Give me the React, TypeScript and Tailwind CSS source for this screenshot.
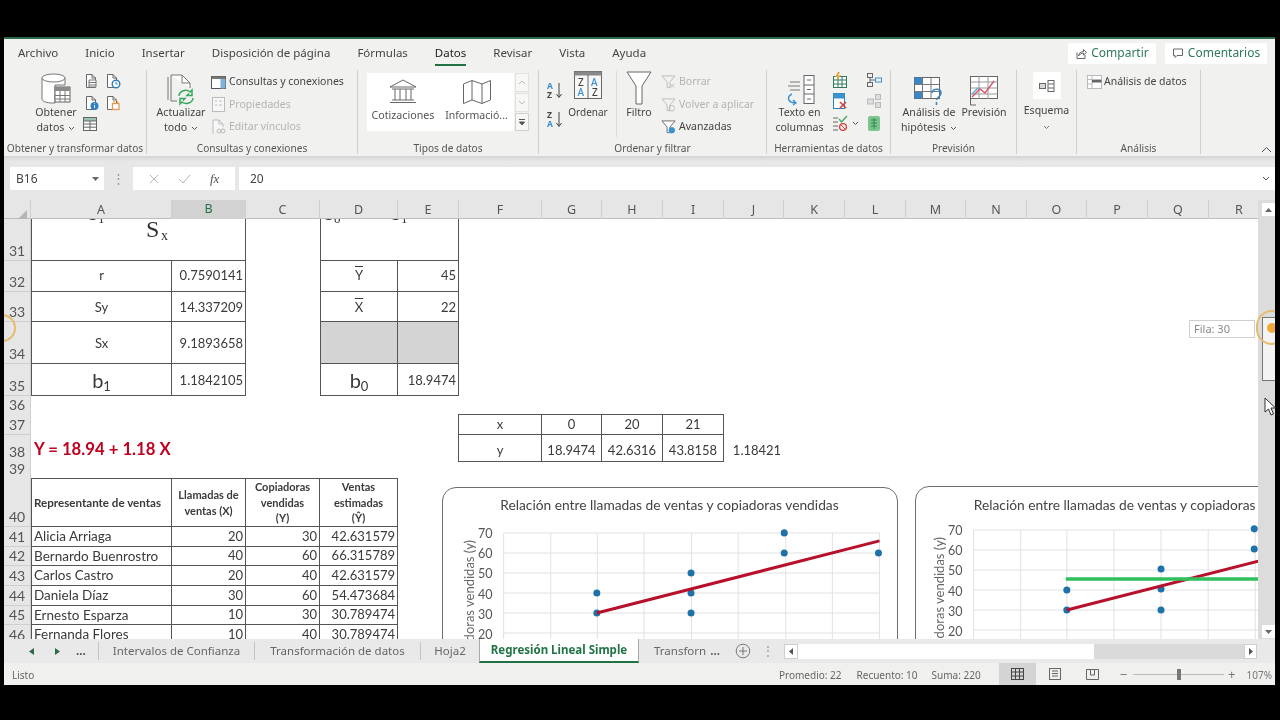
import React from "react";

const COLS = "grid grid-cols-[27px_141px_74px_74px_78px_61px_83px_60px_61px_61px_60px_61px_61px_60px_61px_60px_61px_61px_49px]";
const UI = "font-['Noto_Sans',sans-serif]";
const CELL = "font-['Lato',sans-serif]";
const LINE = "border-[#555]";

const Doc = ({ c = "#666", children }: { c?: string; children?: React.ReactNode }) => (
  <svg width="16" height="16" viewBox="0 0 16 16" fill="none">
    <path d="M2.5 14.5V1.5H8L11.5 5V14.5Z" fill="#fff" stroke={c} />
    <path d="M8 1.5V5H11.5" stroke={c} />
    {children}
  </svg>
);

const Chevron = () => (
  <svg width="7" height="5" viewBox="0 0 7 5" className="inline-block ml-1 align-middle" fill="none">
    <path d="M1 1L3.5 3.5L6 1" stroke="#555" />
  </svg>
);

const SmallRow = ({ icon, text, off, gap = "gap-[3px]" }: { icon: React.ReactNode; text: string; off?: boolean; gap?: string }) => (
  <div className={`flex items-center h-[22.5px] ${gap}`}>
    <span className="w-[15px] h-[16px] flex items-center justify-center">{icon}</span>
    <span className={`text-[10.5px] whitespace-nowrap ${off ? "text-[#b4b4b4]" : "text-[#444]"}`}>{text}</span>
  </div>
);

const Group = ({ w, label, children }: { w: string; label?: string; children: React.ReactNode }) => (
  <div className={`${w} shrink-0 h-[84px] flex flex-col border-r border-[#d0d0ce]`}>
    <div className="flex-1 flex min-h-0 pt-[1px]">{children}</div>
    {label ? <div className="h-[14px] leading-[16px] text-center text-[10.1px] text-[#555] whitespace-nowrap">{label}</div> : null}
  </div>
);

const Big = ({ w, icon, l1, l2, chev }: { w: string; icon: React.ReactNode; l1: string; l2?: string; chev?: boolean }) => (
  <div className={`${w} shrink-0 flex flex-col items-center`}>
    <div className="h-[35px] flex items-end justify-center">{icon}</div>
    <div className="text-[10.6px] leading-[15px] text-[#444] whitespace-nowrap mt-[-1px]">{l1}</div>
    {l2 || chev ? (
      <div className="text-[10.6px] leading-[15px] text-[#444] whitespace-nowrap">
        {l2}
        {chev ? <Chevron /> : null}
      </div>
    ) : null}
  </div>
);

const Cell = ({ cls = "", children }: { cls?: string; children?: React.ReactNode }) => (
  <div className={`border-r border-b ${LINE} flex items-center overflow-hidden whitespace-nowrap ${cls}`}>{children}</div>
);

const Num = ({ cls = "", v }: { cls?: string; v: string }) => (
  <Cell cls={`justify-end pr-[2px] text-[13px] ${cls}`}>{v}</Cell>
);

const Mid = ({ cls = "", children }: { cls?: string; children?: React.ReactNode }) => (
  <Cell cls={`justify-center text-[13px] ${cls}`}>{children}</Cell>
);

const Head = ({ children }: { children: React.ReactNode }) => (
  <Cell cls="border-t justify-center text-center text-[11px] font-bold leading-[15.5px]">
    <span>{children}</span>
  </Cell>
);

const Row = ({ n, h, children }: { n: number; h: string; children?: React.ReactNode }) => (
  <div className={`${COLS} ${h} text-[#3a3a3a] ${CELL}`}>
    <div className="bg-[#e6e6e6] border-r border-b border-[#cfcfcf] flex items-end justify-center pb-[1px] text-[14px] leading-[17px] text-[#555]">{n}</div>
    {children}
  </div>
);

const colNames = ["A", "B", "C", "D", "E", "F", "G", "H", "I", "J", "K", "L", "M", "N", "O", "P", "Q", "R"];

const reps: [number, string, string, string, string, string][] = [
  [41, "h-[20px]", "Alicia Arriaga", "20", "30", "42.631579"],
  [42, "h-[19px]", "Bernardo Buenrostro", "40", "60", "66.315789"],
  [43, "h-[20px]", "Carlos Castro", "20", "40", "42.631579"],
  [44, "h-[20px]", "Daniela Díaz", "30", "60", "54.473684"],
  [45, "h-[19px]", "Ernesto Esparza", "10", "30", "30.789474"],
  [46, "h-[20px]", "Fernanda Flores", "10", "40", "30.789474"],
];

const Chart = ({ box, vb, title, tx, ty, ticks, vlines, left, right, pts, red, green, axis }: {
  box: string; vb: string; title: string; tx: number; ty: number; ticks: [string, number][]; vlines: number[]; left: number; right: number;
  pts: [number, number][]; red: [number, number, number, number]; green?: [number, number, number, number]; axis: [number, number];
}) => (
  <div className={`absolute ${box} bg-white border-[1.5px] border-[#6d6d6d] rounded-[14px] overflow-hidden`}>
    <svg width="100%" height="100%" viewBox={vb} style={{ fontFamily: "Lato, sans-serif" }}>
      <text x={tx} y={ty} fontSize="13.75" fill="#444" textAnchor="middle">{title}</text>
      <text transform={`rotate(-90 ${axis[0]} ${axis[1]})`} x={axis[0]} y={axis[1]} fontSize="13" fill="#666" textAnchor="end">Copiadoras vendidas (y)</text>
      {ticks.map(([t, y]) => (
        <g key={t}>
          <line x1={left} x2={right} y1={y} y2={y} stroke="#e2e2e2" />
          <text x={left - 11} y={y + 5.5} fontSize="12.5" fill="#555" textAnchor="end">{t}</text>
        </g>
      ))}
      {vlines.map((x) => (
        <line key={x} x1={x} x2={x} y1={ticks[0][1]} y2="660" stroke="#e2e2e2" />
      ))}
      {pts.map(([x, y], i) => (
        <circle key={i} cx={x} cy={y} r="3.5" fill="#1f72a8" />
      ))}
      <line x1={red[0]} y1={red[1]} x2={red[2]} y2={red[3]} stroke="#b8102a" strokeWidth="3" />
      {green ? <line x1={green[0]} y1={green[1]} x2={green[2]} y2={green[3]} stroke="#2fbf5c" strokeWidth="3.5" /> : null}
    </svg>
  </div>
);

export default function App() {
  return (
    <div className={`relative w-[1280px] h-[720px] bg-black overflow-hidden pt-[37px] pb-[35px] pl-[4px] pr-[5px] ${UI}`}>
      <div className="h-full flex flex-col bg-[#f1f1ef] blur-[0.35px]">
        {/* tabs */}
        <div className="h-[29px] shrink-0 border-t-[2px] border-[#2d6a4a] flex items-center pl-[14px] pr-[8px] gap-[27px] text-[11.5px] text-[#444]">
          <span>Archivo</span>
          <span>Inicio</span>
          <span>Insertar</span>
          <span>Disposición de página</span>
          <span>Fórmulas</span>
          <span className="relative text-[#222]">
            Datos
            <span className="absolute left-0 right-0 bottom-[-5px] h-[2.5px] bg-[#217346]"></span>
          </span>
          <span>Revisar</span>
          <span>Vista</span>
          <span>Ayuda</span>
          <div className="ml-auto flex gap-[9px] text-[12px] text-[#2f7a57]">
            <div className="w-[88px] h-[21px] bg-white rounded-[2px] flex items-center justify-center gap-[3px] mt-[1px]">
              <svg width="13" height="13" viewBox="0 0 13 13" fill="none" stroke="#666">
                <path d="M2 5.5V11.5H10V8" />
                <path d="M3.5 9C4 6 6 4.5 8.5 4.5V2.5L11.5 5.5L8.5 8V6C6.5 6 5 7 3.5 9Z" />
              </svg>
              Compartir
            </div>
            <div className="w-[102px] h-[21px] bg-white rounded-[2px] flex items-center justify-center gap-[4px] mt-[1px]">
              <svg width="12" height="12" viewBox="0 0 12 12" fill="none" stroke="#666">
                <path d="M1.5 2H10.5V8.5H5L3 10.5V8.5H1.5Z" />
              </svg>
              Comentarios
            </div>
          </div>
        </div>

        {/* ribbon */}
        <div className="h-[90px] shrink-0 flex items-start pt-[4px] relative">
          <Group w="w-[143px]" label="Obtener y transformar datos">
            <div className="flex pl-[26px]">
              <Big w="w-[52px]" l1="Obtener" l2="datos" chev icon={
                <svg width="30" height="33" viewBox="0 0 30 33" fill="none">
                  <path d="M1 5V26C1 28.5 6 30 11 30H14V12H24V5" fill="#fff" stroke="#777" />
                  <ellipse cx="12.5" cy="5" rx="11.5" ry="4" fill="#fff" stroke="#777" />
                  <rect x="14" y="14" width="15" height="15" fill="#fff" stroke="#666" />
                  <rect x="14" y="14" width="15" height="4" fill="#8a8a8a" />
                  <path d="M14 22.5H29M14 26H29M19 18V29M24 18V29" stroke="#777" />
                </svg>
              } />
              <div className="flex flex-col pt-[2px]">
                <div className="flex gap-[5px] pl-[2px]">
                  <Doc><path d="M5 7H12V14H5Z" fill="#fff" stroke="#777" /><path d="M5 9.5H12M5 12H12" stroke="#777" /></Doc>
                  <Doc><circle cx="11" cy="11" r="3.8" fill="#fff" stroke="#2f80b8" strokeWidth="1.4" /><path d="M11 9V11H12.5" stroke="#2f80b8" /></Doc>
                </div>
                <div className="flex gap-[5px] pl-[2px] mt-[6px]">
                  <Doc><circle cx="10.5" cy="11" r="4" fill="#2f80c4" /><path d="M10.5 10V13M10.5 8.5V9" stroke="#fff" /></Doc>
                  <Doc><rect x="7.5" y="8.5" width="6.5" height="6" fill="#fff" stroke="#e09a50" strokeWidth="1.3" /><path d="M9 8.5V6.5C9 5 12.5 5 12.5 6.5V8.5" stroke="#e09a50" /></Doc>
                </div>
                <div className="mt-[5px]">
                  <svg width="16" height="16" viewBox="0 0 16 16" fill="none">
                    <rect x="1.5" y="1.5" width="13" height="13" fill="#fff" stroke="#666" />
                    <rect x="1.5" y="1.5" width="13" height="3.5" fill="#9cc2b0" stroke="#666" />
                    <path d="M1.5 8H14.5M1.5 11.2H14.5M8 5V14.5" stroke="#666" />
                  </svg>
                </div>
              </div>
            </div>
          </Group>

          <Group w="w-[211px]" label="Consultas y conexiones">
            <div className="flex pl-[8px]">
              <Big w="w-[52px]" l1="Actualizar" l2="todo" chev icon={
                <svg width="30" height="32" viewBox="0 0 30 32" fill="none">
                  <path d="M2 3V26" stroke="#777" />
                  <path d="M5 1H16L24 9V14" fill="#fff" stroke="#777" />
                  <path d="M5 1V27H11" stroke="#777" />
                  <path d="M16 1V9H24" stroke="#777" />
                  <path d="M13 22C13.5 17 20 14.5 24 18L26 16V21.5H21L23 19.5" stroke="#3aa75e" strokeWidth="1.5" />
                  <path d="M27 24C26.5 29 20 31 16 28L14 30V24.5H19L17 26.5" stroke="#3aa75e" strokeWidth="1.5" />
                </svg>
              } />
              <div className="flex flex-col pl-[4px]">
                <SmallRow text="Consultas y conexiones" icon={
                  <svg width="15" height="13" viewBox="0 0 15 13" fill="none">
                    <rect x=".5" y=".5" width="14" height="12" fill="#fff" stroke="#555" />
                    <rect x=".5" y=".5" width="14" height="2.5" fill="#777" />
                    <rect x="9.5" y="3" width="5" height="9.5" fill="#7fb4dc" />
                  </svg>
                } />
                <SmallRow off text="Propiedades" icon={
                  <svg width="13" height="15" viewBox="0 0 13 15" fill="none" stroke="#bbb">
                    <rect x=".5" y=".5" width="12" height="14" fill="#f7f7f7" />
                    <path d="M3 4H5M7 4H10M3 8H5M7 8H10" />
                  </svg>
                } />
                <SmallRow off text="Editar vínculos" icon={
                  <svg width="15" height="16" viewBox="0 0 15 16" fill="none" stroke="#bbb">
                    <path d="M2 15V1H8L12 5V8" fill="#f7f7f7" />
                    <path d="M8 1V5H12" />
                    <rect x="6" y="10" width="4" height="4" rx="2" />
                    <rect x="10" y="10" width="4" height="4" rx="2" />
                  </svg>
                } />
              </div>
            </div>
          </Group>

          <Group w="w-[181px]" label="Tipos de datos">
            <div className="flex pl-[9px] pt-[2px]">
              <div className="w-[147px] h-[58px] bg-white flex">
                <div className="w-[72px] flex flex-col items-center pt-[6px]">
                  <svg width="30" height="26" viewBox="0 0 30 26" fill="none" stroke="#666">
                    <path d="M15 1L28 8H2Z" />
                    <path d="M4 10H26M2 23.5H28M4 21H26M7 10V21M12 10V21M18 10V21M23 10V21" />
                  </svg>
                  <span className="text-[10.7px] leading-[14px] text-[#555] mt-[3px]">Cotizaciones</span>
                </div>
                <div className="w-[75px] flex flex-col items-center pt-[6px]">
                  <svg width="30" height="26" viewBox="0 0 30 26" fill="none" stroke="#666">
                    <path d="M1.5 5L10 1.5L20 5L28.5 1.5V21L20 24.5L10 21L1.5 24.5Z" />
                    <path d="M10 1.5V21M20 5V24.5" />
                  </svg>
                  <span className="text-[10.5px] leading-[14px] text-[#555] mt-[3px]">Informació...</span>
                </div>
              </div>
              <div className="flex flex-col w-[14px] ml-[1px] h-[58px] gap-[1px]">
                {["M2 6L5 3L8 6", "M2 3L5 6L8 3"].map((d) => (
                  <div key={d} className="h-[19px] bg-[#f7f7f6] border border-[#e2e2e0] flex items-center justify-center">
                    <svg width="10" height="9" viewBox="0 0 10 9" fill="none" stroke="#bbb"><path d={d} /></svg>
                  </div>
                ))}
                <div className="h-[18px] bg-[#f7f7f6] border border-[#d0d0d0] flex items-center justify-center">
                  <svg width="10" height="9" viewBox="0 0 10 9" fill="#555" stroke="#555"><path d="M2 1.5H8" /><path d="M2.5 4H7.5L5 7Z" /></svg>
                </div>
              </div>
            </div>
          </Group>

          <Group w="w-[228px]" label="Ordenar y filtrar">
            <div className="flex">
              <div className="flex flex-col pl-[8px] pt-[10px] w-[25px] gap-[11px] shrink-0">
                <svg width="17" height="18" viewBox="0 0 17 18" fontFamily="Noto Sans, sans-serif" fontSize="8.5" fontWeight="700">
                  <text x="0" y="8" fill="#3c8fcf">A</text>
                  <text x="0" y="16.5" fill="#444">Z</text>
                  <path d="M12 2V16M9.5 13L12 16.5L14.5 13" stroke="#444" fill="none" />
                </svg>
                <svg width="17" height="18" viewBox="0 0 17 18" fontFamily="Noto Sans, sans-serif" fontSize="8.5" fontWeight="700">
                  <text x="0" y="8" fill="#444">Z</text>
                  <text x="0" y="16.5" fill="#3c8fcf">A</text>
                  <path d="M12 2V16M9.5 13L12 16.5L14.5 13" stroke="#444" fill="none" />
                </svg>
              </div>
              <div className="w-[48px] flex flex-col items-center shrink-0">
                <svg width="28" height="29" viewBox="0 0 28 29" fontFamily="Noto Sans, sans-serif" fontSize="10" fontWeight="500">
                  <rect x=".5" y=".5" width="27" height="27" fill="#f7f7f6" stroke="#666" />
                  <rect x=".5" y=".5" width="27" height="4" fill="#888" />
                  <path d="M14 4V27.5" stroke="#666" />
                  <text x="4" y="14.5" fill="#444">Z</text>
                  <text x="3.5" y="25" fill="#3c8fcf">A</text>
                  <text x="17" y="14.5" fill="#3c8fcf">A</text>
                  <text x="18" y="25" fill="#444">Z</text>
                </svg>
                <span className="text-[10px] leading-[15px] text-[#444] mt-[5px]">Ordenar</span>
              </div>
              <div className="w-px h-[66px] bg-[#dcdcda] ml-[4px]"></div>
              <div className="w-[44px] flex flex-col items-center shrink-0">
                <svg width="26" height="34" viewBox="0 0 26 34" fill="none" stroke="#666">
                  <path d="M1 1H25L16 15V33H10V15Z" fill="#fff" />
                </svg>
                <span className="text-[10.6px] leading-[15px] text-[#444]">Filtro</span>
              </div>
              <div className="flex flex-col">
                <SmallRow off text="Borrar" icon={
                  <svg width="16" height="16" viewBox="0 0 16 16" fill="none" stroke="#bbb"><path d="M1 1.5H15L9.5 8V14H6.5V8Z" /><path d="M10 10L14 14M14 10L10 14" /></svg>
                } />
                <SmallRow off text="Volver a aplicar" icon={
                  <svg width="16" height="16" viewBox="0 0 16 16" fill="none" stroke="#bbb"><path d="M1 1.5H15L9.5 8V14H6.5V8Z" /><circle cx="11.5" cy="11.5" r="3" /></svg>
                } />
                <SmallRow text="Avanzadas" icon={
                  <svg width="16" height="16" viewBox="0 0 16 16" fill="none" stroke="#666"><path d="M1 1.5H15L9.5 8V14H6.5V8Z" fill="#fff" /><circle cx="11.5" cy="11.5" r="3" fill="#3a93cf" stroke="#3a93cf" /></svg>
                } />
              </div>
            </div>
          </Group>

          <Group w="w-[124px]" label="Herramientas de datos">
            <div className="flex">
              <Big w="w-[65px]" l1="Texto en" l2="columnas" icon={
                <svg width="30" height="32" viewBox="0 0 30 32" fill="none">
                  <path d="M5 8H15M3 12H15M5 16H15" stroke="#777" />
                  <rect x="19" y="1.5" width="10" height="28" fill="#fff" stroke="#666" />
                  <path d="M19 11H29M19 20H29M22 6H26M22 15.5H26M22 25H26" stroke="#666" />
                  <path d="M7 20C1 23 3 29 11 29M8 26L11 29L8 31" stroke="#3a93cf" strokeWidth="1.4" />
                </svg>
              } />
              <div className="flex flex-col pt-[1px] gap-[5px]">
                <svg width="16" height="16" viewBox="0 0 16 16" fill="none">
                  <rect x="1.5" y="4.5" width="13" height="11" fill="#fff" stroke="#2f7a57" />
                  <path d="M1.5 8H14.5M1.5 12H14.5M6 4.5V15.5M10 4.5V15.5" stroke="#2f7a57" />
                  <path d="M6 0L3 5H6L4 9L9 3.5H6L8 0Z" fill="#e5a133" />
                </svg>
                <svg width="16" height="17" viewBox="0 0 16 17" fill="none">
                  <rect x="1.5" y=".5" width="11" height="15" fill="#fff" stroke="#2f80b8" />
                  <rect x="1.5" y=".5" width="11" height="5" fill="#3a93cf" />
                  <path d="M8 9L14 15M14 9L8 15" stroke="#d8413a" strokeWidth="1.6" />
                </svg>
                <div className="flex items-center">
                  <svg width="16" height="16" viewBox="0 0 16 16" fill="none">
                    <path d="M1 3H6M1 7H6M1 11H6M1 15H6" stroke="#666" />
                    <path d="M7 4L9.5 7L15 1" stroke="#46a66a" strokeWidth="1.4" />
                    <circle cx="11" cy="12" r="3.4" stroke="#d8413a" strokeWidth="1.3" />
                    <path d="M8.7 9.7L13.3 14.3" stroke="#d8413a" />
                  </svg>
                  <Chevron />
                </div>
              </div>
              <div className="flex flex-col pl-[7px] pt-[2px] gap-[6px]">
                <svg width="16" height="15" viewBox="0 0 16 15" fill="none" stroke="#666">
                  <rect x="1.5" y=".5" width="5" height="4" /><rect x="1.5" y="9.5" width="5" height="4" /><rect x="9.5" y="5" width="6" height="4" stroke="#3a93cf" />
                  <path d="M4 4.5V9.5M4 7H9.5" />
                </svg>
                <svg width="16" height="15" viewBox="0 0 16 15" fill="#ddd" stroke="#bbb">
                  <rect x="9.5" y=".5" width="5" height="5" /><rect x="9.5" y="8.5" width="5" height="5" /><rect x="1.5" y="5" width="6" height="5" />
                </svg>
                <svg width="16" height="17" viewBox="0 0 16 17" fill="none">
                  <rect x="2" y="1" width="12" height="15" rx="2" fill="#7cc48d" />
                  <path d="M5 5H11M5 8H11M5 11H11M8 3V14" stroke="#2f8a52" />
                </svg>
              </div>
            </div>
          </Group>

          <Group w="w-[126px]" label="Previsión">
            <div className="flex pl-[9px]">
              <Big w="w-[58px]" l1="Análisis de" l2="hipótesis" chev icon={
                <svg width="30" height="29" viewBox="0 0 30 29" fill="none">
                  <rect x=".5" y=".5" width="25" height="21" fill="#fff" stroke="#666" />
                  <rect x=".5" y=".5" width="8" height="7" fill="#3a87c4" />
                  <rect x=".5" y="14.5" width="8" height="7" fill="#3a87c4" />
                  <path d="M8.5 1V21.5M17 1V21.5M1 7.5H25M1 14.5H25" stroke="#777" />
                  <path d="M18 16C19 11 27 11 27 16C27 20 22.5 20 22.5 23M22.5 25V28" stroke="#3a87c4" strokeWidth="1.6" />
                </svg>
              } />
              <div className="w-[1px]"></div>
              <Big w="w-[50px]" l1="Previsión" icon={
                <svg width="28" height="31" viewBox="0 0 28 31" fill="none">
                  <rect x=".5" y="1.5" width="27" height="22" fill="#fff" stroke="#666" />
                  <path d="M.5 7H27.5M.5 13H27.5M.5 19H27.5M9 1.5V24M18 1.5V24" stroke="#999" />
                  <path d="M2 22L10 14L15 18L24 6" stroke="#d8536a" strokeWidth="1.4" />
                  <path d="M2 19L8 13" stroke="#58a8d8" strokeWidth="1.4" />
                  <path d="M.5 24V30H6" stroke="#666" />
                </svg>
              } />
            </div>
          </Group>

          <Group w="w-[60px]">
            <div className="w-full flex flex-col items-center pt-[1px] h-full">
              <div className="w-[28px] h-[27px] bg-white flex items-center justify-center">
                <svg width="16" height="12" viewBox="0 0 16 12" fill="none" stroke="#666">
                  <rect x=".5" y="3.5" width="6" height="5" fill="#d8d8d8" />
                  <rect x="9" y=".5" width="6" height="11" />
                  <path d="M9 4H15M9 8H15" />
                </svg>
              </div>
              <span className="text-[10.5px] text-[#444] mt-[4px]">Esquema</span>
              <svg width="7" height="5" viewBox="0 0 7 5" fill="none" className="mt-[6px]"><path d="M1 1L3.5 3.5L6 1" stroke="#777" /></svg>
            </div>
          </Group>

          <Group w="w-[124px]" label="Análisis">
            <div className="pl-[10px]">
              <SmallRow gap="gap-[2px]" text="Análisis de datos" icon={
                <svg width="15" height="14" viewBox="0 0 15 14" fill="none">
                  <rect x=".5" y=".5" width="14" height="13" fill="#fff" stroke="#bbb" />
                  <path d="M5 .5V13.5M.5 4.5H14.5M.5 9H5" stroke="#bbb" />
                  <rect x="5" y="5" width="9.5" height="2.5" fill="#666" />
                </svg>
              } />
            </div>
          </Group>
          <svg width="11" height="7" viewBox="0 0 11 7" fill="none" stroke="#555" className="ml-auto mr-[3px] mt-[76px]">
            <path d="M1 6L5.5 1.5L10 6" />
          </svg>
        </div>

        {/* formula bar */}
        <div className="h-[44px] shrink-0 bg-[#e7e7e7] bg-gradient-to-b from-[#d4d4d4] to-[#e7e7e7] to-[12%] flex items-start pt-[11px] pl-[6px] text-[12px] text-[#444]">
          <div className="w-[94px] h-[23px] bg-white flex items-center pl-[6px] justify-between pr-[5px]">
            B16
            <svg width="7" height="4" viewBox="0 0 7 4" fill="#666"><path d="M0 0H7L3.5 4Z" /></svg>
          </div>
          <div className="w-[29px] h-[23px] flex items-center justify-center text-[#999] tracking-tighter text-[13px]">⋮</div>
          <div className="w-[102px] h-[23px] bg-white flex items-center justify-around px-[6px]">
            <svg width="10" height="10" viewBox="0 0 10 10" stroke="#b5b5b5" fill="none"><path d="M1 1L9 9M9 1L1 9" /></svg>
            <svg width="13" height="10" viewBox="0 0 13 10" stroke="#b5b5b5" fill="none"><path d="M1 5L5 9L12 1" /></svg>
            <span className="italic font-['Liberation_Serif',serif] text-[13px] text-[#555]">fx</span>
          </div>
          <div className="ml-[4px] flex-1 h-[23px] bg-white flex items-center pl-[11px] pr-[5px] justify-between">
            20
            <svg width="8" height="5" viewBox="0 0 8 5" fill="none" stroke="#555"><path d="M1 1L4 4L7 1" /></svg>
          </div>
        </div>

        {/* sheet + vertical scroll */}
        <div className="h-[439px] shrink-0 flex">
          <div className="w-[1254px] shrink-0 flex flex-col">
            <div className={`${COLS} h-[19px] shrink-0 bg-[#e6e6e6] border-b border-[#bdbdbd] text-[12.5px] text-[#555]`}>
              <div className="flex items-end justify-end pr-[3px] pb-[2px] border-r border-[#cfcfcf]">
                <svg width="9" height="9" viewBox="0 0 9 9" fill="#b5b5b5"><path d="M9 0V9H0Z" /></svg>
              </div>
              {colNames.map((c) => (
                <div key={c} className={`flex items-center border-r border-[#cfcfcf] ${c === "R" ? "justify-start pl-[26px] border-r-0" : "justify-center"} ${c === "B" ? "bg-[#d2d2d2] text-[#217346] border-b-[2px] border-b-[#217346]" : ""}`}>{c}</div>
              ))}
            </div>
            <div className="relative h-[420px] bg-white overflow-hidden">
              <Row n={31} h="h-[42px]">
                <div className={`col-span-2 relative border-l border-r border-b ${LINE} overflow-hidden font-['Liberation_Serif',serif] text-[#333]`}>
                  <span className="absolute left-[56px] top-[-21px] text-[20px]">b<sub className="text-[13px]">1</sub></span>
                  <span className="absolute left-[100px] top-[-17px] text-[14px]">r</span>
                  <span className="absolute left-[114px] top-[-8px] text-[24px]">S</span>
                  <span className="absolute left-[129px] top-[6px] text-[14px]">x</span>
                </div>
                <div></div>
                <div className={`col-span-2 relative border-l border-r border-b ${LINE} overflow-hidden font-['Liberation_Serif',serif] text-[#333]`}>
                  <span className="absolute left-[3px] top-[-21px] text-[20px]">b<sub className="text-[13px]">0</sub></span>
                  <span className="absolute left-[42px] top-[-19px] text-[14px]">+</span>
                  <span className="absolute left-[70px] top-[-21px] text-[20px]">b<sub className="text-[13px]">1</sub></span>
                  <span className="absolute left-[92px] top-[-17px] text-[14px]">X</span>
                </div>
              </Row>
              <Row n={32} h="h-[31px]">
                <Mid cls="border-l">r</Mid>
                <Num v="0.7590141" />
                <div></div>
                <Mid cls="border-l"><span className="overline">Y</span></Mid>
                <Num v="45" />
              </Row>
              <Row n={33} h="h-[30px]">
                <Mid cls="border-l pt-[2px]">Sy</Mid>
                <Num cls="pt-[2px]" v="14.337209" />
                <div></div>
                <Mid cls="border-l pt-[2px]"><span className="overline">X</span></Mid>
                <Num cls="pt-[2px]" v="22" />
              </Row>
              <Row n={34} h="h-[42px]">
                <Mid cls="border-l pt-[2px]">Sx</Mid>
                <Num cls="pt-[2px]" v="9.1893658" />
                <div></div>
                <Cell cls="border-l bg-[#d4d4d4]" />
                <Cell cls="bg-[#d4d4d4]" />
              </Row>
              <Row n={35} h="h-[32px]">
                <Mid cls="border-l !text-[20px]"><span>b<sub className="text-[13px]">1</sub></span></Mid>
                <Num cls="pt-[2px]" v="1.1842105" />
                <div></div>
                <Mid cls="border-l !text-[20px]"><span>b<sub className="text-[13px]">0</sub></span></Mid>
                <Num cls="pt-[2px]" v="18.9474" />
              </Row>
              <Row n={36} h="h-[18px]" />
              <Row n={37} h="h-[21px]">
                <div className={`col-start-6 border-r ${LINE}`}></div>
                <Mid cls="border-t">x</Mid>
                <Mid cls="border-t">0</Mid>
                <Mid cls="border-t">20</Mid>
                <Mid cls="border-t">21</Mid>
              </Row>
              <Row n={38} h="h-[25px]">
                <div className="col-span-2 flex items-center pl-[3px] pt-[2px] text-[16.7px] font-bold text-[#c00020] whitespace-nowrap">Y = 18.94 + 1.18 X</div>
                <div className={`col-start-6 border-r ${LINE}`}></div>
                <Mid cls="pt-[5px]">y</Mid>
                <Mid cls="pt-[5px]">18.9474</Mid>
                <Mid cls="pt-[5px]">42.6316</Mid>
                <Mid cls="pt-[5px]">43.8158</Mid>
                <div className="flex items-center justify-center pt-[5px] pl-[6px] text-[13px]">1.18421</div>
              </Row>
              <Row n={39} h="h-[18px]" />
              <Row n={40} h="h-[49px]">
                <Cell cls="border-l border-t pl-[2px] text-[11.6px] font-bold">Representante de ventas</Cell>
                <Head>Llamadas de<br />ventas (X)</Head>
                <Head>Copiadoras<br />vendidas<br />(Y)</Head>
                <Head>Ventas<br />estimadas<br />(Ŷ)</Head>
              </Row>
              {reps.map(([n, h, name, x, y, e]) => (
                <Row key={n} n={n} h={h}>
                  <Cell cls="border-l pl-[2px] text-[13.5px]">{name}</Cell>
                  <Num v={x} />
                  <Num v={y} />
                  <Num v={e} />
                </Row>
              ))}
              <Chart
                box="left-[438px] top-[268px] w-[456px] h-[200px]"
                vb="443.5 488.5 453 197"
                title="Relación entre llamadas de ventas y copiadoras vendidas"
                tx={669.5}
                ty={510}
                ticks={[["70", 533], ["60", 553], ["50", 573], ["40", 593], ["30", 613], ["20", 633]]}
                vlines={[504, 551, 597.5, 644, 691.5, 738, 785.5, 832, 879]}
                left={504}
                right={879}
                pts={[[597, 593], [597, 613], [691, 573], [691, 593], [691, 613], [784, 533], [784, 553], [878, 553]]}
                red={[597, 613, 879, 541]}
                axis={[474, 540]}
              />
              <Chart
                box="left-[911px] top-[267px] w-[456px] h-[200px]"
                vb="916.5 487.5 453 197"
                title="Relación entre llamadas de ventas y copiadoras vendidas"
                tx={1143}
                ty={510}
                ticks={[["70", 530], ["60", 550], ["50", 570], ["40", 590], ["30", 610], ["20", 630]]}
                vlines={[974, 1021, 1067, 1114, 1161, 1208, 1255, 1302, 1349]}
                left={974}
                right={1349}
                pts={[[1067, 590], [1067, 610], [1161, 569], [1161, 589], [1161, 610], [1254, 529], [1254, 549], [1348, 549]]}
                red={[1067, 610, 1349, 538]}
                green={[1066, 579, 1349, 579]}
                axis={[944, 537]}
              />
              {/* tooltip */}
              <div className="absolute left-[1185px] top-[101px] w-[66px] h-[18px] bg-white border border-[#cfcfcf] text-[11px] text-[#888] pl-[4px] leading-[16px]">Fila: 30</div>
            </div>
          </div>
          {/* vertical scrollbar */}
          <div className="flex-1 bg-[#dcdcdc] flex flex-col items-end pt-[3px] pb-[1px]">
            <div className="w-[13px] h-[13px] bg-white flex items-center justify-center">
              <svg width="7" height="4" viewBox="0 0 7 4" fill="#666"><path d="M3.5 0L7 4H0Z" /></svg>
            </div>
            <div className="w-[13px] h-[64px] mt-[101px] bg-[#f3f3f3] border border-[#777] border-r-0"></div>
            <div className="w-[13px] h-[13px] mt-auto bg-white flex items-center justify-center">
              <svg width="7" height="4" viewBox="0 0 7 4" fill="#666"><path d="M0 0H7L3.5 4Z" /></svg>
            </div>
          </div>
        </div>

        {/* sheet tabs */}
        <div className="h-[24px] shrink-0 bg-[#e9e9e9] flex items-center text-[11.5px] text-[#666]">
          <div className="w-[94px] flex items-center pl-[25px] h-full">
            <svg width="5" height="7" viewBox="0 0 5 7" fill="#2d6a4a"><path d="M5 0V7L0 3.5Z" /></svg>
            <svg width="5" height="7" viewBox="0 0 5 7" fill="#2d6a4a" className="ml-[21px]"><path d="M0 0V7L5 3.5Z" /></svg>
            <span className="ml-[16px] font-bold text-[#555]">...</span>
          </div>
          <div className="w-px h-[18px] bg-[#c4c4c4]"></div>
          <div className="w-[155px] text-center">Intervalos de Confianza</div>
          <div className="w-px h-[18px] bg-[#c4c4c4]"></div>
          <div className="w-[165px] text-center">Transformación de datos</div>
          <div className="w-px h-[18px] bg-[#c4c4c4]"></div>
          <div className="w-[58px] text-center">Hoja2</div>
          <div className="w-[160px] h-[25px] mt-[-1px] bg-white border-x border-[#aaa] border-b-[2px] border-b-[#217346] flex items-center justify-center font-bold text-[#217346]">Regresión Lineal Simple</div>
          <div className="w-[95px] pl-[15px] whitespace-nowrap">Transforn <b className="ml-[1px]">...</b></div>
          <svg width="16" height="16" viewBox="0 0 16 16" fill="none" stroke="#777" className="ml-[1px]">
            <circle cx="8" cy="8" r="6.8" />
            <path d="M8 4V12M4 8H12" />
          </svg>
          <span className="w-[33px] text-center text-[#999]">⋮</span>
          <div className="w-[473px] h-[15px] flex bg-[#dadada] shrink-0">
            <div className="w-[14px] bg-white border border-[#cfcfcf] flex items-center justify-center">
              <svg width="4" height="7" viewBox="0 0 4 7" fill="#555"><path d="M4 0V7L0 3.5Z" /></svg>
            </div>
            <div className="w-[296px] bg-white"></div>
            <div className="ml-auto w-[13px] bg-white border border-[#cfcfcf] flex items-center justify-center">
              <svg width="4" height="7" viewBox="0 0 4 7" fill="#555"><path d="M0 0V7L4 3.5Z" /></svg>
            </div>
          </div>
        </div>

        {/* status */}
        <div className="flex-1 flex items-center bg-[#f0f0ee] text-[10px] text-[#666] pl-[8px]">
          <span className="pt-[3px]">Listo</span>
          <div className="ml-auto flex items-center h-full">
            <span className="pt-[3px]">Promedio: 22</span>
            <span className="pt-[3px] ml-[15px]">Recuento: 10</span>
            <span className="pt-[3px] ml-[14px]">Suma: 220</span>
            <div className="ml-[18px] w-[37px] h-full bg-[#d4d4d4] flex items-center justify-center">
              <svg width="13" height="12" viewBox="0 0 13 12" fill="none" stroke="#444"><rect x=".5" y=".5" width="12" height="11" /><path d="M.5 4H12.5M.5 8H12.5M4.5 .5V11.5M8.5 .5V11.5" /></svg>
            </div>
            <div className="w-[38px] flex justify-center">
              <svg width="12" height="12" viewBox="0 0 12 12" fill="none" stroke="#666"><rect x=".5" y=".5" width="11" height="11" /><path d="M3 3H9M3 5.5H9M3 8H9" /></svg>
            </div>
            <div className="w-[37px] flex justify-center">
              <svg width="13" height="11" viewBox="0 0 13 11" fill="none" stroke="#666"><path d="M.5 .5H12.5V10.5H.5ZM4.5 .5V6M8.5 .5V6M4.5 6H8.5" /></svg>
            </div>
            <span className="ml-[9px] text-[#777] text-[13px] leading-none">−</span>
            <div className="relative w-[91px] h-px bg-[#bbb] ml-[6px]">
              <div className="absolute left-[44px] top-[-5px] w-[4px] h-[11px] bg-[#777]"></div>
            </div>
            <span className="ml-[4px] text-[#777] text-[13px] leading-none">+</span>
            <span className="pt-[3px] ml-[11px] mr-[3px] text-[#777]">107%</span>
          </div>
        </div>
      </div>

      {/* recording highlights */}
      <div className="absolute left-[-12px] top-[314px] w-[28px] h-[28px] rounded-full border-2 border-[#e6bb6c]"></div>
      <div className="absolute left-[1256px] top-[310px] w-[32px] h-[35px] rounded-full border-2 border-[#e6bb6c]"></div>
      <div className="absolute left-[1267px] top-[323px] w-[10px] h-[10px] rounded-full bg-[#eeaa3c]"></div>
      <div className="absolute left-[1275px] top-[300px] w-[5px] h-[60px] bg-black"></div>
      <div className="absolute left-0 top-[300px] w-[4px] h-[60px] bg-black"></div>
      <svg width="13" height="20" viewBox="0 0 13 20" className="absolute left-[1264px] top-[397px]" fill="#fff" stroke="#333">
        <path d="M1 1V15L4.5 12L7 18L9.5 17L7 11H11.5Z" />
      </svg>
    </div>
  );
}
